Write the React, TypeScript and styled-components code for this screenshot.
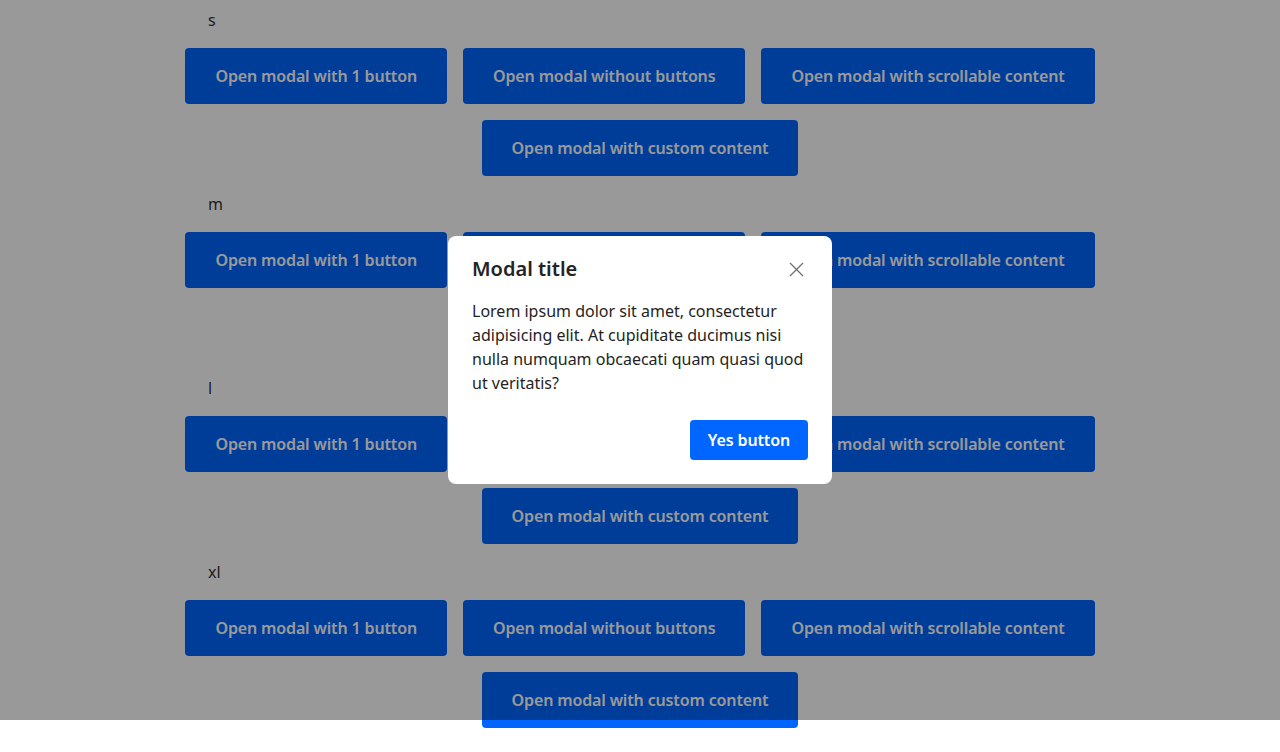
import React from "react";
import styled, { createGlobalStyle } from "styled-components";

const GlobalStyle = createGlobalStyle`
  html, body { margin: 0; padding: 0; background: #ffffff; }
  body { font-family: "Noto Sans", "Open Sans", sans-serif; color: #333333; }
  * { box-sizing: border-box; }
`;

const Page = styled.div`
  width: 1280px;
  display: flex;
  flex-direction: column;
  gap: 8px;
`;

const Section = styled.section`
  padding-top: 8px;
  display: flex;
  flex-direction: column;
  gap: 16px;
`;

const SizeLabel = styled.div`
  padding-left: 208px;
  font-size: 16px;
  line-height: 24px;
  color: #333333;
`;

const ButtonGrid = styled.div`
  width: 930px;
  margin: 0 auto;
  display: flex;
  flex-wrap: wrap;
  justify-content: center;
  gap: 16px;
`;

const OpenButton = styled.button`
  height: 56px;
  padding: 0 30px;
  border: none;
  border-radius: 4px;
  background: #0066ff;
  color: #ffffff;
  font-family: inherit;
  font-size: 16px;
  font-weight: 600;
  letter-spacing: -0.14px;
  cursor: pointer;
  white-space: nowrap;
`;

const Overlay = styled.div`
  position: fixed;
  top: 0;
  left: 0;
  right: 0;
  height: 720px;
  background: rgba(0, 0, 0, 0.4);
  display: flex;
  align-items: flex-start;
  justify-content: center;
  padding-top: 236px;
`;

const Dialog = styled.div`
  width: 384px;
  background: #ffffff;
  border-radius: 8px;
  padding: 20px 24px 24px;
  display: flex;
  flex-direction: column;
`;

const DialogHeader = styled.div`
  display: flex;
  align-items: center;
  justify-content: space-between;
`;

const DialogTitle = styled.h2`
  margin: 0;
  font-size: 20px;
  line-height: 26px;
  font-weight: 600;
  color: #242424;
`;

const CloseButton = styled.button`
  width: 24px;
  height: 24px;
  padding: 0;
  border: none;
  background: transparent;
  display: flex;
  align-items: center;
  justify-content: center;
  cursor: pointer;
`;

const DialogBody = styled.p`
  margin: 17px 0 0;
  font-size: 16px;
  line-height: 24px;
  color: #242424;
`;

const DialogFooter = styled.div`
  margin-top: 25px;
  display: flex;
  justify-content: flex-end;
`;

const PrimaryButton = styled.button`
  height: 40px;
  padding: 0 18px;
  border: none;
  border-radius: 4px;
  background: #0066ff;
  color: #ffffff;
  font-family: inherit;
  font-size: 16px;
  font-weight: 600;
  letter-spacing: -0.14px;
  cursor: pointer;
`;

const sizes = ["s", "m", "l", "xl"];
const buttons = [
  "Open modal with 1 button",
  "Open modal without buttons",
  "Open modal with scrollable content",
  "Open modal with custom content",
];

export default function App() {
  return (
    <>
      <GlobalStyle />
      <Page>
        {sizes.map((s) => (
          <Section key={s}>
            <SizeLabel>{s}</SizeLabel>
            <ButtonGrid>
              {buttons.map((b) => (
                <OpenButton key={b}>{b}</OpenButton>
              ))}
            </ButtonGrid>
          </Section>
        ))}
      </Page>
      <Overlay>
        <Dialog>
          <DialogHeader>
            <DialogTitle>Modal title</DialogTitle>
            <CloseButton aria-label="Close">
              <svg width="15" height="15" viewBox="0 0 15 15">
                <path d="M1 1 L14 14 M14 1 L1 14" stroke="#707070" strokeWidth="1.3" />
              </svg>
            </CloseButton>
          </DialogHeader>
          <DialogBody>
            Lorem ipsum dolor sit amet, consectetur adipisicing elit. At cupiditate ducimus nisi nulla numquam obcaecati quam quasi quod ut veritatis?
          </DialogBody>
          <DialogFooter>
            <PrimaryButton>Yes button</PrimaryButton>
          </DialogFooter>
        </Dialog>
      </Overlay>
    </>
  );
}
